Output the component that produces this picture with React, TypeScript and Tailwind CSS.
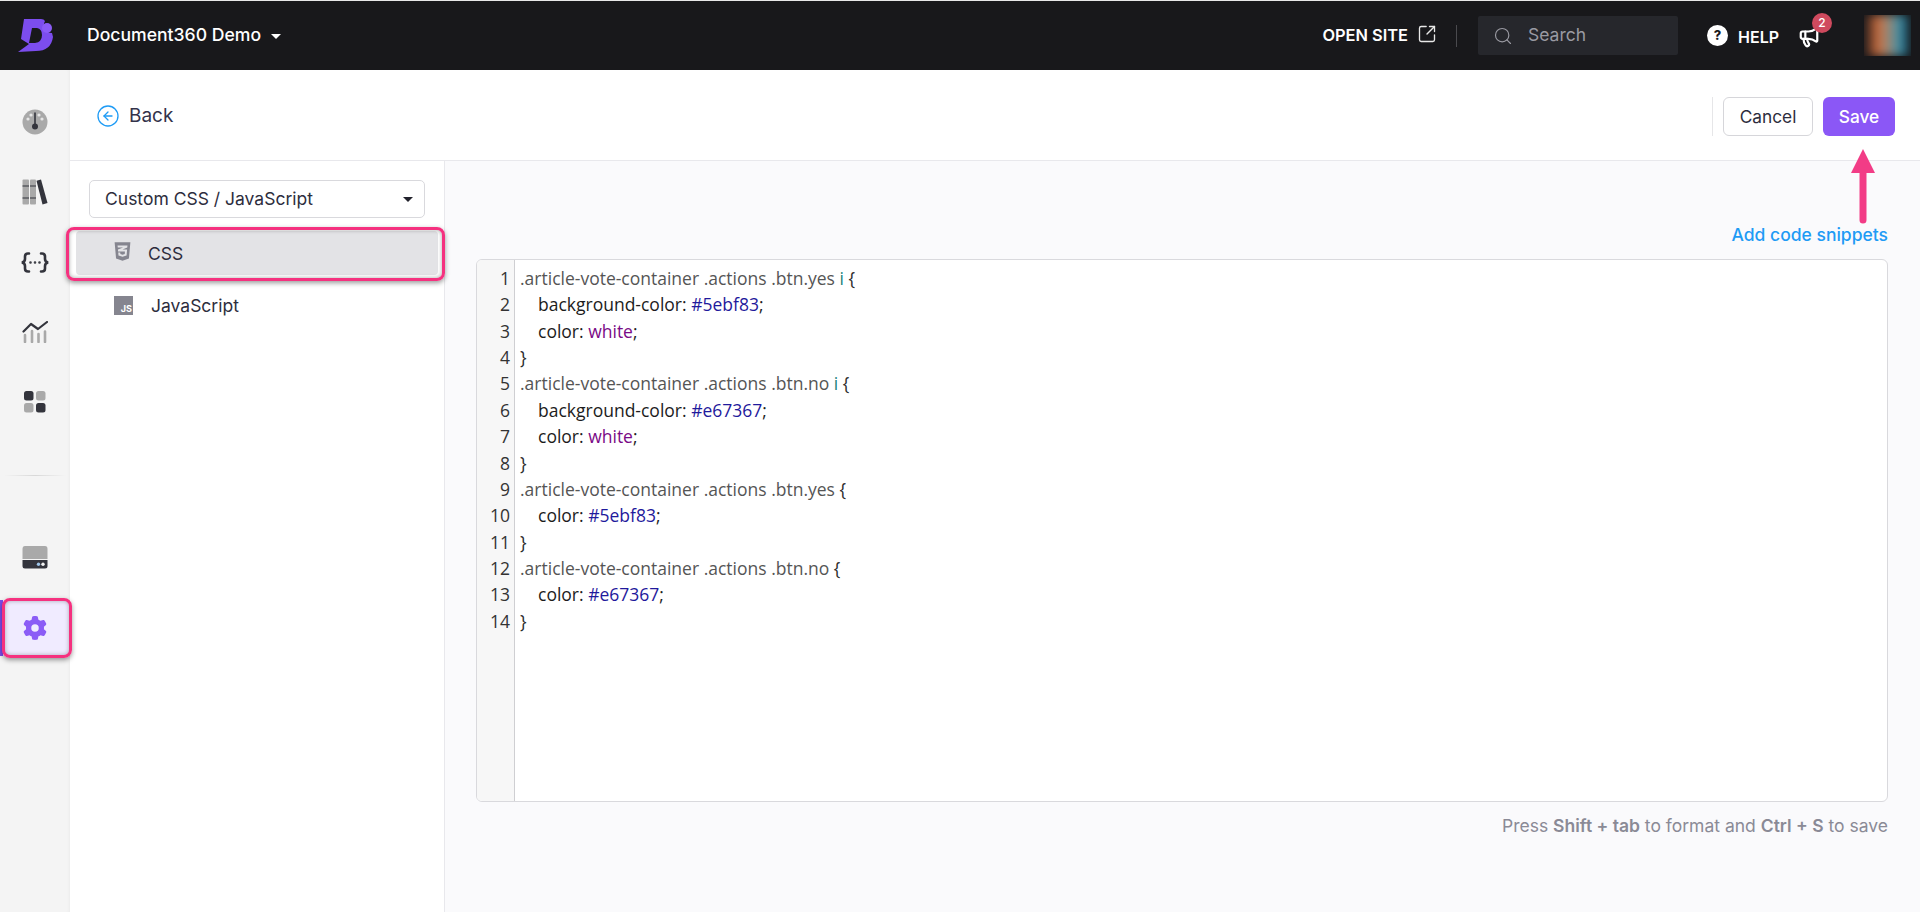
import React from "react";
import { Search, SquareArrowOutUpRight, CircleArrowLeft, Megaphone } from "lucide-react";
import { FaGear } from "react-icons/fa6";
import { FaCss3Alt } from "react-icons/fa";

const G = "#a9a9a9";
const D = "#33343c";

function Logo() {
  return (
    <svg width="36" height="35" viewBox="18 18 36 35" className="shrink-0">
      <path
        fillRule="evenodd"
        fill="#7c4dee"
        d="M24 19 L41 19 Q44 19 45 21 A8 8 0 0 0 52 33 L53 37 Q51 51 36 51 L18 52 L29 44 L21 39 Z M32 28 L29 43 L35 43 Q42 42 42 35 Q42 29 37 28 Z"
      />
      <circle cx="47" cy="28" r="5" fill="#8b5cf6" />
    </svg>
  );
}

function Gauge() {
  return (
    <svg width="26" height="26" viewBox="0 0 26 26">
      <circle cx="13" cy="13" r="12.5" fill={G} />
      <circle cx="6" cy="10" r="1.6" fill="#e6e6e6" />
      <circle cx="9" cy="6" r="1.6" fill="#e6e6e6" />
      <circle cx="17" cy="6" r="1.6" fill="#e6e6e6" />
      <circle cx="20" cy="10" r="1.6" fill="#e6e6e6" />
      <path d="M13 3.5 V16" stroke={D} strokeWidth="1.6" />
      <circle cx="13" cy="17.5" r="3" fill={D} />
    </svg>
  );
}
function Books() {
  return (
    <svg width="26" height="26" viewBox="0 0 26 26">
      <rect x="0.5" y="0.5" width="6.5" height="25" rx="1" fill={G} />
      <rect x="8" y="0.5" width="6" height="25" rx="1" fill={G} />
      <path d="M0.5 7h6.5M8 7h6M0.5 19h6.5M8 19h6" stroke={D} strokeWidth="1.2" />
      <path d="M14.5 1.8 L19 0.5 L25.5 24 L20.5 25.5 Z" fill={D} />
    </svg>
  );
}
function Braces() {
  return (
    <svg width="30" height="21" viewBox="0 0 30 21" fill="none" stroke={D} strokeWidth="2.6" strokeLinecap="round">
      <path d="M9 1.5 H8 Q5 1.5 5 4.5 V7 Q5 10 1.8 10.5 Q5 11 5 14 V16.5 Q5 19.5 8 19.5 H9" />
      <path d="M21 1.5 H22 Q25 1.5 25 4.5 V7 Q25 10 28.2 10.5 Q25 11 25 14 V16.5 Q25 19.5 22 19.5 H21" />
      <circle cx="10.5" cy="10.5" r="0.5" fill={D} strokeWidth="1.6" />
      <circle cx="15" cy="10.5" r="0.5" fill={D} strokeWidth="1.6" />
      <circle cx="19.5" cy="10.5" r="0.5" fill={D} strokeWidth="1.6" />
    </svg>
  );
}
function Chart() {
  return (
    <svg width="26" height="22" viewBox="0 0 26 22" fill="none">
      <path d="M1.5 10.5 L9 3 L16 8 L25 1" stroke={D} strokeWidth="2.2" strokeLinecap="round" strokeLinejoin="round" />
      <path d="M3 14 V21M10 10 V21M16.5 13 V21M23 10.5 V21" stroke={G} strokeWidth="2.6" strokeLinecap="round" />
    </svg>
  );
}
function Grid4() {
  return (
    <svg width="24" height="24" viewBox="0 0 24 24">
      <rect x="1" y="1" width="9.5" height="9.5" rx="2.5" fill={D} />
      <rect x="13" y="1" width="9.5" height="9.5" rx="2.5" fill={G} />
      <rect x="1" y="13" width="9.5" height="9.5" rx="2.5" fill={G} />
      <rect x="13" y="13" width="9.5" height="9.5" rx="2.5" fill={D} />
    </svg>
  );
}
function Server() {
  return (
    <svg width="26" height="23" viewBox="0 0 26 23">
      <path d="M3 0 H23 Q25.5 0 25.5 3 V13 H0.5 V3 Q0.5 0 3 0 Z" fill={G} />
      <path d="M0.5 14 H25.5 V20 Q25.5 22.5 23 22.5 H3 Q0.5 22.5 0.5 20 Z" fill={D} />
      <circle cx="16.5" cy="18.2" r="1.7" fill="#9ec4e8" />
      <circle cx="21" cy="18.2" r="1.7" fill="#f2f2f2" />
    </svg>
  );
}

function Sel({ children }: { children: React.ReactNode }) {
  return <span className="text-[#555555]">{children}</span>;
}
function Prop({ name, value, kw }: { name: string; value: string; kw?: boolean }) {
  return (
    <>
      <span className="pl-[18px] text-[#1c1c1c]">{name}: </span>
      <span className={kw ? "text-[#7a0a86]" : "text-[#1f1a9c]"}>{value}</span>
      <span className="text-[#1c1c1c]">;</span>
    </>
  );
}
const Brace = ({ c }: { c: string }) => <span className="text-[#2c2c2c]">{c}</span>;
const Teal = () => <span className="text-[#1a7f7a]">i </span>;

const lines: React.ReactNode[] = [
  <><Sel>.article-vote-container .actions .btn.yes </Sel><Teal /><Brace c="{" /></>,
  <Prop name="background-color" value="#5ebf83" />,
  <Prop name="color" value="white" kw />,
  <Brace c="}" />,
  <><Sel>.article-vote-container .actions .btn.no </Sel><Teal /><Brace c="{" /></>,
  <Prop name="background-color" value="#e67367" />,
  <Prop name="color" value="white" kw />,
  <Brace c="}" />,
  <><Sel>.article-vote-container .actions .btn.yes </Sel><Brace c="{" /></>,
  <Prop name="color" value="#5ebf83" />,
  <Brace c="}" />,
  <><Sel>.article-vote-container .actions .btn.no </Sel><Brace c="{" /></>,
  <Prop name="color" value="#e67367" />,
  <Brace c="}" />,
];

export default function App() {
  return (
    <div className="relative flex h-[912px] w-full flex-col overflow-hidden bg-white font-['Inter',sans-serif] text-[#2d2d3d]">
      <div className="h-px shrink-0 bg-[#e8e8e8]" />
      <header className="flex h-[69px] shrink-0 items-center bg-[#18181b] pl-[18px] pr-[9px] text-white">
        <Logo />
        <span className="ml-[33px] text-[17.6px] font-medium">Document360 Demo</span>
        <span className="ml-[10px] mt-[2px] h-0 w-0 border-x-[5px] border-t-[5px] border-x-transparent border-t-white" />
        <div className="ml-auto flex items-center">
          <span className="text-[16.4px] font-semibold">OPEN SITE</span>
          <SquareArrowOutUpRight size={20} strokeWidth={1.6} className="ml-[9px] mb-[3px] text-[#e8e8e8]" />
          <span className="ml-[19px] h-[22px] w-px bg-[#4a4a4e]" />
          <div className="ml-[21px] flex h-[39px] w-[200px] items-center rounded-[2px] bg-[#26272c] pl-[15px] text-[#9a9aa2]">
            <Search size={20} strokeWidth={1.4} />
            <span className="ml-[15px] text-[17.5px]">Search</span>
          </div>
          <span className="ml-[29px] flex h-[21px] w-[21px] items-center justify-center rounded-full bg-white text-[13px] font-extrabold text-[#18181b]">?</span>
          <span className="ml-[10px] mt-[2px] text-[16px] font-semibold">HELP</span>
          <div className="relative ml-[19px] mt-[2px] flex">
            <Megaphone size={22} strokeWidth={2.4} />
            <span className="absolute -right-[12px] -top-[13px] flex h-[20px] w-[20px] items-center justify-center rounded-full bg-[#cf4a5e] text-[12px] font-medium">2</span>
          </div>
          <div className="ml-[44px] h-[41px] w-[47px] overflow-hidden">
            <div className="h-full w-full bg-[linear-gradient(90deg,#1a1a1c_0%,#c8683a_28%,#9a8a78_52%,#2f8aa8_80%,#18181b_100%)] blur-[5px]" />
          </div>
        </div>
      </header>

      <div className="flex min-h-0 flex-1">
        <aside className="flex w-[70px] shrink-0 flex-col items-stretch bg-[#f4f4f4] pt-[17px] shadow-[inset_-3px_0_4px_-3px_rgba(0,0,0,0.06)]">
          <div className="flex h-[70px] items-center justify-center"><Gauge /></div>
          <div className="flex h-[70px] items-center justify-center"><Books /></div>
          <div className="flex h-[70px] items-center justify-center"><Braces /></div>
          <div className="flex h-[70px] items-center justify-center"><Chart /></div>
          <div className="flex h-[70px] items-center justify-center"><Grid4 /></div>
          <div className="mx-[4px] mt-[38px] h-px bg-[linear-gradient(90deg,#f4f4f4,#d8d8d8,#f4f4f4)]" />
          <div className="mt-[46px] flex h-[70px] items-center justify-center"><Server /></div>
          <div className="mt-[8px] flex h-[56px] items-center justify-center border-l-[3px] border-[#7c4dee] bg-[#f0ebff] pr-[3px] text-[#8b5cf6]">
            <FaGear size={24} />
          </div>
        </aside>

        <main className="flex min-w-0 flex-1 flex-col">
          <div className="flex h-[91px] shrink-0 items-center border-b border-[#e8e8ec] bg-white pl-[26px] pr-[25px]">
            <CircleArrowLeft size={24} strokeWidth={1.3} className="mt-[1px] text-[#1e9bf5]" />
            <span className="ml-[9px] mt-[3px] text-[19px] text-[#33334a]">Back</span>
            <div className="ml-auto flex items-center self-start pt-[27px]">
              <span className="h-[39px] w-px bg-[#e6e6e8]" />
              <button className="ml-[10px] h-[39px] w-[90px] rounded-[6px] border border-[#d6d6da] bg-white text-[17.3px] text-[#2d2d3d]">Cancel</button>
              <button className="ml-[10px] h-[39px] w-[72px] rounded-[6px] bg-[#8b57f6] text-[17.3px] font-medium text-white">Save</button>
            </div>
          </div>

          <div className="flex min-h-0 flex-1">
            <nav className="w-[375px] shrink-0 border-r border-[#e8e8ec] bg-white">
              <div className="mx-[19px] mt-[19px] flex h-[38px] w-[336px] items-center rounded-[5px] border border-[#d9d9dd] pl-[15px] pr-[11px] text-[17.5px]">
                <span>Custom CSS / JavaScript</span>
                <span className="ml-auto h-0 w-0 border-x-[5px] border-t-[5px] border-x-transparent border-t-[#22222c]" />
              </div>
              <div className="mx-[6px] mt-[13px] flex h-[44px] w-[362px] items-center rounded-[4px] bg-[#e3e3e6] pl-[36px] text-[17.5px]">
                <FaCss3Alt size={21} className="mb-[4px] text-[#85858f]" />
                <span className="ml-[15px] mt-[2px]">CSS</span>
              </div>
              <div className="mx-[6px] mt-[8px] flex h-[44px] items-center pl-[38px] text-[17.5px]">
                <span className="flex h-[19px] w-[19px] items-end justify-end bg-[#85858f] pr-px text-[9px] font-bold leading-[12px] text-white">JS</span>
                <span className="ml-[18px] mt-[2px]">JavaScript</span>
              </div>
            </nav>

            <section className="min-w-0 flex-1 bg-[#fafafc] pl-[31px] pr-[32px] pt-[62px]">
              <div className="h-[24px] text-right text-[17.5px] font-medium leading-[24px] text-[#1e9bf5]">Add code snippets</div>
              <div className="mt-[12px] flex h-[543px] overflow-hidden rounded-[6px] border border-[#d9d9dd] bg-white font-['Open_Sans',sans-serif] text-[17.5px] leading-[26.36px]">
                <div className="w-[38px] shrink-0 border-r border-[#cfcfd2] bg-[#f7f7f7] pr-[4px] pt-[5px] text-right text-[#333333]">
                  {lines.map((_, i) => (
                    <div key={i} className="h-[26.36px]">{i + 1}</div>
                  ))}
                </div>
                <div className="min-w-0 flex-1 pl-[5px] pt-[5px]">
                  {lines.map((l, i) => (
                    <div key={i} className="h-[26.36px] whitespace-pre">{l}</div>
                  ))}
                </div>
              </div>
              <div className="mt-[14px] h-[20px] text-right text-[17.5px] leading-[20px] text-[#8a8a96]">
                Press <b className="font-semibold">Shift + tab</b> to format and <b className="font-semibold">Ctrl + S</b> to save
              </div>
            </section>
          </div>
        </main>
      </div>

      {/* annotations lying over the page */}
      <div className="pointer-events-none absolute left-[66px] top-[227px] h-[54px] w-[379px] rounded-[8px] border-[3px] border-[#f5317f] shadow-[0_2px_5px_rgba(0,0,0,0.4),inset_0_0_4px_rgba(0,0,0,0.35)]" />
      <div className="pointer-events-none absolute left-[2px] top-[598px] h-[60px] w-[70px] rounded-[8px] border-[3px] border-[#f5317f] shadow-[0_2px_5px_rgba(0,0,0,0.4),inset_0_0_4px_rgba(0,0,0,0.3)]" />
      <svg className="pointer-events-none absolute left-[1851px] top-[149px]" width="24" height="75" viewBox="0 0 24 75">
        <path d="M12 0 L24 24 H15.5 V71 Q15.5 74.5 12 74.5 Q8.5 74.5 8.5 71 V24 H0 Z" fill="#f23c86" />
      </svg>
    </div>
  );
}
